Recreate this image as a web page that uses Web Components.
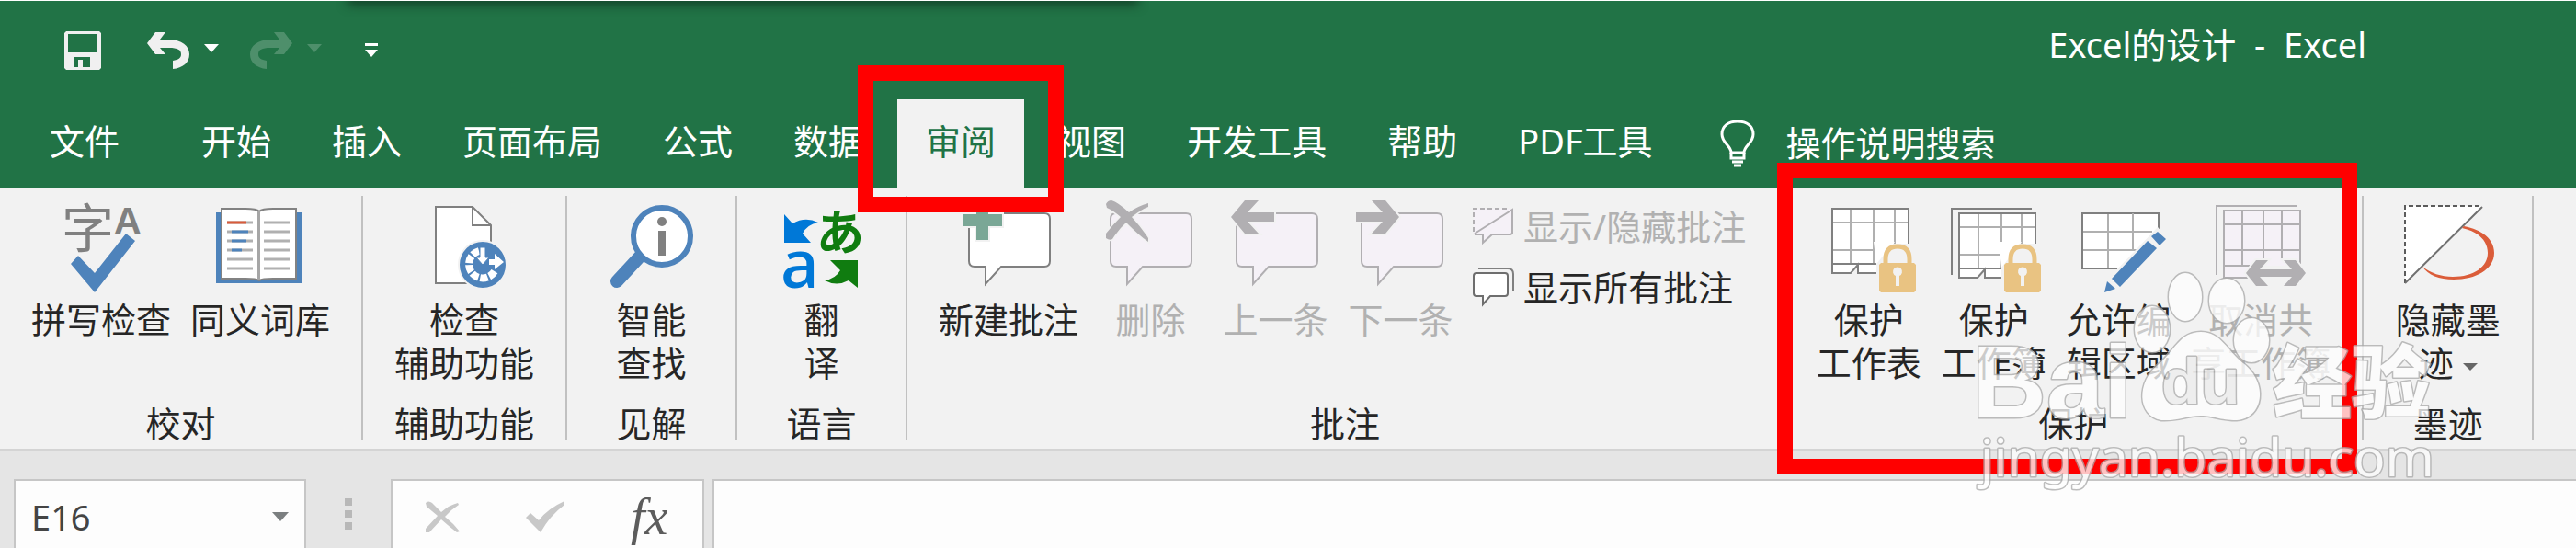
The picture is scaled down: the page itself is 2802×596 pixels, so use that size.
<!DOCTYPE html>
<html lang="zh-CN">
<head>
<meta charset="utf-8">
<title>Excel的设计 - Excel</title>
<style>
  body {
    --green: #217346;
    --ribbon: #f2f2f2;
    --ink: #262626;
    --muted: #b1b1b1;
    margin: 0;
    overflow: hidden;
    background: #e5e5e5;
    color: var(--ink);
    font-family: "Noto Sans", "Noto Sans CJK SC", sans-serif;
    font-size: 38px;
  }
</style>
</head>
<body>
<excel-window>
  <title-bar slot="title">Excel的设计&nbsp; -&nbsp; Excel</title-bar>

  <ribbon-tabs slot="tabs">
    <ribbon-tab file>文件</ribbon-tab>
    <ribbon-tab>开始</ribbon-tab>
    <ribbon-tab>插入</ribbon-tab>
    <ribbon-tab>页面布局</ribbon-tab>
    <ribbon-tab>公式</ribbon-tab>
    <ribbon-tab>数据</ribbon-tab>
    <ribbon-tab active>审阅</ribbon-tab>
    <ribbon-tab>视图</ribbon-tab>
    <ribbon-tab>开发工具</ribbon-tab>
    <ribbon-tab>帮助</ribbon-tab>
    <ribbon-tab>PDF工具</ribbon-tab>
    <tell-me>操作说明搜索</tell-me>
  </ribbon-tabs>

  <ribbon-group label="校对">
    <ribbon-button>
      <svg slot="icon" viewBox="0 0 100 111" width="100" height="111">
        <text x="7" y="56" font-family="Noto Sans CJK SC, sans-serif" font-size="57" fill="#808080">字</text>
        <text x="64" y="41" font-family="Liberation Sans, sans-serif" font-weight="bold" font-size="41" fill="#808080">A</text>
        <path d="M17 74 25 65 43 84 77 41 87 49 43 105Z" fill="#4e83bb"/>
      </svg>
      拼写检查
    </ribbon-button>
    <ribbon-button>
      <svg slot="icon" viewBox="0 0 100 111" width="100" height="111">
        <path d="M2 18H95V95H2Z" fill="#4e83bb"/>
        <path d="M8 14H34Q46 14 49 17Q52 14 64 14H89V90H64Q52 90 49 92Q46 90 34 90H8Z" fill="#fff" stroke="#828282" stroke-width="2"/>
        <path d="M48.500 17V91" stroke="#a6a6a6" stroke-width="3"/>
        <path d="M14 29H42M14 39H42M14 49H42M14 59H42M14 69H42M14 79H42M54 29H82M54 39H82M54 49H82M54 59H82M54 69H82M54 79H82" stroke="#b0b0b0" stroke-width="3"/>
        <path d="M14 29H35" stroke="#d95b3a" stroke-width="3"/>
        <path d="M19 39H37M19 49H35M19 59H30" stroke="#4e83bb" stroke-width="3"/>
      </svg>
      同义词库
    </ribbon-button>
  </ribbon-group>

  <ribbon-group label="辅助功能">
    <ribbon-button>
      <svg slot="icon" viewBox="0 0 100 111" width="100" height="111">
        <path d="M19 12H59L79 32V95H19Z" fill="#fff" stroke="#808080" stroke-width="2"/>
        <path d="M59 12V32H79" fill="none" stroke="#808080" stroke-width="2"/>
        <circle cx="70" cy="75" r="26" fill="#4e83bb" stroke="#f2f2f2" stroke-width="2"/>
        <path d="M66 60A15 15 0 1 0 83 82" fill="none" stroke="#fff" stroke-width="8" stroke-dasharray="8 2"/>
        <path d="M67 56H73V67H77L70 75 63 67H67Z" fill="#fff" stroke="#4e83bb"/>
        <path d="M77 69H83V63L93 72 83 80V75H77Z" fill="#fff"/>
      </svg>
      检查<br>辅助功能
    </ribbon-button>
  </ribbon-group>

  <ribbon-group label="见解">
    <ribbon-button>
      <svg slot="icon" viewBox="0 0 100 111" width="100" height="111">
        <path d="M37 66 12 93" stroke="#4e83bb" stroke-width="14" stroke-linecap="round"/>
        <circle cx="61" cy="44" r="31" fill="#fff" stroke="#4e83bb" stroke-width="6"/>
        <circle cx="61" cy="28" r="5" fill="#808080"/>
        <path d="M57 38H65V65H57Z" fill="#808080"/>
      </svg>
      智能<br>查找
    </ribbon-button>
  </ribbon-group>

  <ribbon-group label="语言">
    <ribbon-button>
      <svg slot="icon" viewBox="0 0 100 111" width="100" height="111">
        <path d="M9 20 18 30Q32 22 46 29Q34 31 29 41L38 51H9Z" fill="#0078d7"/>
        <text x="5" y="100" font-family="Noto Sans, sans-serif" font-weight="500" font-size="73" fill="#0078d7">a</text>
        <text x="44" y="59" font-family="Noto Sans CJK JP, sans-serif" font-weight="700" font-size="52" fill="#107c10">あ</text>
        <path d="M89 100 79 92Q66 99 53 92Q65 90 70 81L59 70H89Z" fill="#107c10"/>
      </svg>
      翻<br>译
    </ribbon-button>
  </ribbon-group>

  <ribbon-group label="批注">
    <ribbon-button>
      <svg slot="icon" viewBox="0 0 100 111" width="100" height="111">
        <path d="M13 19H89Q95 19 95 25V71Q95 77 89 77H42L25 96V77H13Q7 77 7 71V25Q7 19 13 19Z" fill="#fff" stroke="#808080" stroke-width="2"/>
        <path d="M15 9H28V20H43V33H28V48H15V33H1V20H15Z" fill="#7aa796" stroke="#f2f2f2" stroke-width="4" paint-order="stroke"/>
      </svg>
      新建批注
    </ribbon-button>
    <ribbon-button disabled>
      <svg slot="icon" viewBox="0 0 100 111" width="100" height="111">
        <path d="M12 19H88Q94 19 94 25V71Q94 77 88 77H41L24 96V77H12Q6 77 6 71V25Q6 19 12 19Z" fill="#f5f1f7" stroke="#b1afb2" stroke-width="2"/>
        <path d="M1 9Q3 5 7 5Q14 7 26 18Q36 11 47 8V12Q39 15 29 23Q40 35 47 46V50Q38 44 23 29Q15 36 8 47Q5 49 1 46V41Q8 32 17 23Q9 16 2 13Z" fill="#b1afb2" stroke="#f2f2f2" stroke-width="3" paint-order="stroke"/>
      </svg>
      删除
    </ribbon-button>
    <ribbon-button disabled>
      <svg slot="icon" viewBox="0 0 100 111" width="100" height="111">
        <path d="M13 19H89Q95 19 95 25V71Q95 77 89 77H42L25 96V77H13Q7 77 7 71V25Q7 19 13 19Z" fill="#f5f1f7" stroke="#b1afb2" stroke-width="2"/>
        <path d="M1 23 16 5H31L19 18H48V28H19L31 41H16Z" fill="#b1afb2" stroke="#f2f2f2" stroke-width="4" paint-order="stroke"/>
      </svg>
      上一条
    </ribbon-button>
    <ribbon-button disabled>
      <svg slot="icon" viewBox="0 0 100 111" width="100" height="111">
        <path d="M13 19H89Q95 19 95 25V71Q95 77 89 77H42L25 96V77H13Q7 77 7 71V25Q7 19 13 19Z" fill="#f5f1f7" stroke="#b1afb2" stroke-width="2"/>
        <path d="M48 23 33 41H18L30 28H1V18H30L18 5H33Z" fill="#b1afb2" stroke="#f2f2f2" stroke-width="4" paint-order="stroke"/>
      </svg>
      下一条
    </ribbon-button>
    <ribbon-stack>
      <small-button disabled>
        <svg slot="icon" viewBox="0 0 46 44" width="46" height="44">
          <path d="M2 3H44V31H22L12 41V31H2Z" fill="#f5f1f7"/>
          <path d="M2 28V3H42" fill="none" stroke="#b1afb2" stroke-width="2" stroke-dasharray="5 3"/>
          <path d="M3 30 44 4V30L42 31H22L12 40V31H3" fill="none" stroke="#b1afb2" stroke-width="2"/>
        </svg>
        显示/隐藏批注
      </small-button>
      <small-button>
        <svg slot="icon" viewBox="0 0 46 44" width="46" height="44">
          <path d="M7 2H39Q45 2 45 8V27" fill="none" stroke="#808080" stroke-width="2"/>
          <path d="M5 7H36Q39 7 39 10V29Q39 32 36 32H20L12 41V32H5Q2 32 2 29V10Q2 7 5 7Z" fill="#fff" stroke="#6e6e6e" stroke-width="2"/>
        </svg>
        显示所有批注
      </small-button>
    </ribbon-stack>
  </ribbon-group>

  <ribbon-group label="保护" marked>
    <ribbon-button>
      <svg slot="icon" viewBox="0 0 100 111" width="100" height="111">
        <path d="M10 14H93V74H10Z" fill="#fff"/>
        <path d="M10 74V84H31L38 76V84H60V74Z" fill="#fff"/>
        <path d="M30 14V74M55 14V74M78 14V74M10 29H93M10 59H93" stroke="#b0b0b0" stroke-width="2"/>
        <path d="M93 60V14H10V84H30L38 75V84H60M10 74H62" fill="none" stroke="#808080" stroke-width="2"/>
        <path d="M58 52H104V108H58Z" fill="#f2f2f2"/>
        <path d="M55 50H78L58 74Z" fill="#fff"/>
        <path d="M68 75V69Q68 55 81 55Q94 55 94 69V75" fill="none" stroke="#e9c382" stroke-width="5"/>
        <path d="M63 73H99L101 75V103L99 105H63L61 103V75Z" fill="#e9c382"/>
        <path d="M79 98V87A5 5 0 1 1 83 87V98Z" fill="#f2f2f2"/>
      </svg>
      保护<br>工作表
    </ribbon-button>
    <ribbon-button>
      <svg slot="icon" viewBox="0 0 100 111" width="100" height="111">
        <path d="M4 86V14H91" fill="none" stroke="#808080" stroke-width="2"/>
        <path d="M12 19H95V79H12Z" fill="#fff"/>
        <path d="M12 79V89H33L40 81V89H60V79Z" fill="#fff"/>
        <path d="M33 19V79M58 19V79M80 19V79M12 34H95M12 64H95" stroke="#b0b0b0" stroke-width="2"/>
        <path d="M95 60V19H12V89H32L40 80V89H60M12 79H62" fill="none" stroke="#808080" stroke-width="2"/>
        <path d="M58 52H104V108H58Z" fill="#f2f2f2"/>
        <path d="M55 50H80L58 78Z" fill="#fff"/>
        <path d="M68 75V69Q68 55 81 55Q94 55 94 69V75" fill="none" stroke="#e9c382" stroke-width="5"/>
        <path d="M63 73H99L101 75V103L99 105H63L61 103V75Z" fill="#e9c382"/>
        <path d="M79 98V87A5 5 0 1 1 83 87V98Z" fill="#f2f2f2"/>
      </svg>
      保护<br>工作簿
    </ribbon-button>
    <ribbon-button>
      <svg slot="icon" viewBox="0 0 100 111" width="100" height="111">
        <path d="M10 19H93V79H10Z" fill="#fff"/>
        <path d="M38 19V79M10 39H86M10 59H70" stroke="#b0b0b0" stroke-width="2"/>
        <path d="M93 36V19H10V79H48" fill="none" stroke="#808080" stroke-width="2"/>
        <path d="M44 84 92 34 104 48V70L50 108H30L36 88Z" fill="#f2f2f2"/>
        <path d="M65 19V59M65 39H86" stroke="#b0b0b0" stroke-width="2"/>
        <path d="M34 105 37 93 46 101ZM42 90 51 99 91 57 81 49ZM85 44 92 39 101 47 94 54Z" fill="#4e83bb"/>
      </svg>
      允许编<br>辑区域
    </ribbon-button>
    <ribbon-button disabled>
      <svg slot="icon" viewBox="0 0 100 111" width="100" height="111">
        <path d="M2 86V11H89" fill="none" stroke="#b1afb2" stroke-width="2"/>
        <path d="M10 16H93V76H37V89H10Z" fill="#f5f1f7"/>
        <path d="M30 16V76M53 16V68M73 16V68M10 31H93M10 59H93M10 76H38" stroke="#b1afb2" stroke-width="2"/>
        <path d="M93 74V16H10V89H38" fill="none" stroke="#b1afb2" stroke-width="2"/>
        <path d="M34 84 45 70H58L49 80H84L75 70H88L99 84 88 98H75L84 88H49L58 98H45Z" fill="#b1afb2" stroke="#f2f2f2" stroke-width="4" paint-order="stroke"/>
      </svg>
      取消共<br>享工作簿
    </ribbon-button>
  </ribbon-group>

  <ribbon-group label="墨迹">
    <ribbon-button>
      <svg slot="icon" viewBox="0 0 100 111" width="100" height="111">
        <path d="M2 11H87L3 95Z" fill="#fff"/>
        <path d="M3 95V11H87" fill="none" stroke="#5c5c5c" stroke-width="2" stroke-dasharray="5 3"/>
        <path d="M3 95 87 12" stroke="#707070" stroke-width="2"/>
        <path d="M67 33C88 37 100 48 100 62C100 80 80 91 56 91C40 91 28 86 22 77C31 84 42 88 55 88C78 88 93 77 93 62C93 50 84 39 65 35Z" fill="#db5d3a"/>
      </svg>
      隐藏墨<br>迹<drop-caret></drop-caret>
    </ribbon-button>
  </ribbon-group>

  <formula-bar slot="formula" cell="E16"></formula-bar>
  <site-watermark slot="overlay"></site-watermark>
</excel-window>

<script>
  // shared reset for the buttons inside each shadow root
  var buttonReset =
    "button { border: 0; margin: 0; padding: 0; background: none; color: inherit; font: inherit; }" +
    "svg { display: block; }";

  // attach an open shadow root filled with styles and markup
  function render(el, css, html) {
    el.attachShadow({ mode: "open" }).innerHTML = "<style>" + css + "</style>" + html;
  }

  customElements.define("excel-window", class extends HTMLElement {
    constructor() {
      super();
      render(this, `
        :host { display: block; position: relative; border-top: 1px solid #fff; }
        header { background: var(--green); color: #fff; }
        .ribbon { display: flex; padding: 9px 0 10px; background: var(--ribbon); border-bottom: 3px solid #d4d4d4; }
      `, `
        <header><slot name="title"></slot><slot name="tabs"></slot></header>
        <section class="ribbon" aria-label="审阅"><slot></slot></section>
        <slot name="formula"></slot>
        <slot name="overlay"></slot>
      `);
    }
  });

  customElements.define("title-bar", class extends HTMLElement {
    constructor() {
      super();
      render(this, buttonReset + `
        :host { display: flex; position: relative; align-items: center; height: 107px; padding: 0 228px 0 70px; box-sizing: border-box; }
        nav { display: flex; align-items: center; gap: 34px; }
        .save { padding-right: 16px; }
        .more { padding-left: 13px; }
        .split { display: flex; align-items: center; gap: 16px; }
        .off { opacity: .2; }
        h1 { margin: 0 0 14px auto; font-size: 38px; line-height: 48px; font-weight: 400; }
        .shade { position: absolute; top: 0; left: 366px; width: 884px; height: 20px; overflow: hidden; }
        .shade::before { content: ""; position: absolute; left: 14px; right: 14px; top: -10px; height: 10px; box-shadow: 0 2px 12px 2px #123f27; }
      `, `
        <nav aria-label="快速访问工具栏">
          <button class="save" aria-label="保存">
            <svg width="40" height="42" viewBox="0 0 40 42"><path fill="#f0f0f0" fill-rule="evenodd" d="M2 0H38L40 2V40L38 42H2L0 40V2ZM4 3V23H36V3ZM10 28V39H15V31H20V39H28V28Z"/></svg>
          </button>
          <span class="split">
            <button aria-label="撤消">
              <svg width="46" height="40" viewBox="0 0 46 40"><path fill="#f0f0f0" d="M0 12 9 0H20L14 8H23C38 8 46 15 46 24C46 33 39 39 28 40V31C34 30 37 28 37 24C37 19 33 17 24 17H14L20 24H9Z"/></svg>
            </button>
            <button aria-label="撤消列表"><svg width="16" height="14" viewBox="0 0 16 14"><path fill="#fff" d="M0 0H16L8 9Z"/></svg></button>
          </span>
          <span class="split off">
            <button aria-label="恢复" disabled>
              <svg width="46" height="40" viewBox="0 0 46 40"><path fill="#fff" d="M46 12 37 0H26L32 8H23C8 8 0 15 0 24C0 33 7 39 18 40V31C12 30 9 28 9 24C9 19 13 17 22 17H32L26 24H37Z"/></svg>
            </button>
            <button aria-label="恢复列表" disabled><svg width="16" height="14" viewBox="0 0 16 14"><path fill="#fff" d="M0 0H16L8 9Z"/></svg></button>
          </span>
          <button class="more" aria-label="自定义快速访问工具栏">
            <svg width="14" height="16" viewBox="0 0 14 16"><path fill="#fff" d="M0 0H14V3H0ZM0 7H14L7 15Z"/></svg>
          </button>
        </nav>
        <h1><slot></slot></h1>
        <div class="shade"></div>
      `);
    }
  });

  customElements.define("ribbon-tabs", class extends HTMLElement {
    constructor() {
      super();
      render(this, `
        :host { display: flex; align-items: stretch; height: 96px; }
      `, `<slot></slot>`);
    }
  });

  customElements.define("ribbon-tab", class extends HTMLElement {
    constructor() {
      super();
      render(this, buttonReset + `
        :host { display: block; position: relative; margin: 0 2px; }
        :host([file]) { margin: 0; }
        :host([active]) { margin: 0 2px 0 4px; }
        button { height: 100%; padding: 0 31px 10px; white-space: nowrap; }
        :host([file]) button { padding: 0 56px 10px 54px; }
        :host([active]) button { background: var(--ribbon); color: var(--green); }
        :host([active])::after {
          content: ""; position: absolute; z-index: 1; inset: -37px -43px -27px;
          border: 17px solid #f00; pointer-events: none;
        }
      `, `<button role="tab"><slot></slot></button>`);
    }
  });

  customElements.define("tell-me", class extends HTMLElement {
    constructor() {
      super();
      render(this, buttonReset + `
        :host { display: block; margin-left: 40px; }
        button { display: flex; align-items: center; gap: 34px; height: 100%; white-space: nowrap; }
        span { padding-bottom: 6px; }
      `, `
        <button>
          <svg width="38" height="52" viewBox="0 0 38 52" fill="none" stroke="#fff" stroke-width="3">
            <path d="M12 36C12 28 2 26 2 16C2 7 9 2 19 2C29 2 36 7 36 16C36 26 26 28 26 36Z"/>
            <path d="M12 36V42H26V36M13 46H25M15 50H23"/>
          </svg>
          <span><slot></slot></span>
        </button>
      `);
    }
  });

  customElements.define("ribbon-group", class extends HTMLElement {
    constructor() {
      super();
      render(this, `
        :host { display: flex; position: relative; flex-direction: column; padding: 0 24px; border-right: 2px solid #c1c1c1; }
        .items { display: flex; flex: 1; gap: 1px; margin-bottom: 24px; }
        .label { line-height: 36px; text-align: center; }
        :host([marked])::after {
          content: ""; position: absolute; z-index: 1; inset: -36px 5px -38px -8px;
          border: 17px solid #f00; pointer-events: none;
        }
      `, `<div class="items"><slot></slot></div><div class="label"></div>`);
    }

    connectedCallback() {
      this.shadowRoot.querySelector(".label").textContent = this.getAttribute("label");
    }
  });

  customElements.define("ribbon-button", class extends HTMLElement {
    constructor() {
      super();
      render(this, buttonReset + `
        :host { display: block; }
        :host([disabled]) { color: var(--muted); }
        button { display: flex; flex-direction: column; align-items: center; min-width: 135px; padding: 0 10px; }
        .text { min-height: 94px; line-height: 47px; white-space: nowrap; }
        ::slotted(svg) { display: block; overflow: visible; }
      `, `<button><slot name="icon"></slot><span class="text"><slot></slot></span></button>`);
    }

    connectedCallback() {
      this.shadowRoot.querySelector("button").disabled = this.hasAttribute("disabled");
    }
  });

  customElements.define("drop-caret", class extends HTMLElement {
    constructor() {
      super();
      render(this, `
        :host { display: inline-block; margin-left: 10px; vertical-align: middle; }
        svg { display: block; }
      `, `<svg width="16" height="8" viewBox="0 0 16 8"><path fill="#666" d="M0 0H16L8 8Z"/></svg>`);
    }
  });

  customElements.define("ribbon-stack", class extends HTMLElement {
    constructor() {
      super();
      render(this, `
        :host { display: flex; flex-direction: column; padding: 0 16px 0 9px; }
      `, `<slot></slot>`);
    }
  });

  customElements.define("small-button", class extends HTMLElement {
    constructor() {
      super();
      render(this, buttonReset + `
        :host { display: block; }
        :host([disabled]) { color: var(--muted); }
        button { display: flex; align-items: center; gap: 10px; line-height: 66px; white-space: nowrap; }
      `, `<button><slot name="icon"></slot><span><slot></slot></span></button>`);
    }

    connectedCallback() {
      this.shadowRoot.querySelector("button").disabled = this.hasAttribute("disabled");
    }
  });

  customElements.define("formula-bar", class extends HTMLElement {
    constructor() {
      super();
      render(this, buttonReset + `
        :host { display: flex; height: 75px; padding: 30px 0 0 15px; color: #444; }
        .box { display: flex; align-items: center; box-sizing: border-box; border: 2px solid #c6c6c6; border-bottom: 0; background: #fdfdfd; }
        input { min-width: 0; border: 0; margin: 0; padding: 0; outline: 0; background: none; color: inherit; font: inherit; }
        .name { width: 318px; padding: 4px 17px 0; }
        .name input { flex: 1; line-height: 48px; }
        .dots { display: flex; flex-direction: column; justify-content: center; gap: 5px; margin: 0 42px; }
        .dots i { width: 8px; height: 8px; background: #b8b8b8; }
        .tools { gap: 72px; padding: 4px 38px 0 35px; }
        .fx { font: italic 56px/60px "Liberation Serif", serif; color: #5c5c5c; }
        .formula { flex: 1; margin-left: 9px; border-right: 0; }
        .formula input { flex: 1; }
      `, `
        <div class="box name">
          <input type="text" aria-label="名称框">
          <button aria-label="名称列表"><svg width="18" height="10" viewBox="0 0 18 10"><path fill="#7b7f80" d="M0 0H18L9 10Z"/></svg></button>
        </div>
        <div class="dots"><i></i><i></i><i></i></div>
        <div class="box tools">
          <button aria-label="取消" disabled>
            <svg width="38" height="34" viewBox="0 0 38 34"><path fill="#c8c8c8" d="M1 2Q4-1 8 2L18 12Q27 4 36 2L37 4Q29 9 22 17Q31 24 38 33L35 34Q27 28 18 20L5 34H1V30L14 16L2 6Z"/></svg>
          </button>
          <button aria-label="输入" disabled>
            <svg width="42" height="34" viewBox="0 0 42 34"><path fill="#c8c8c8" d="M0 18 5 13 14 21Q24 8 42 0V4Q26 16 16 34Z"/></svg>
          </button>
          <button class="fx" aria-label="插入函数">fx</button>
        </div>
        <div class="box formula"><input type="text" aria-label="编辑栏"></div>
      `);
    }

    connectedCallback() {
      this.shadowRoot.querySelector("input").value = this.getAttribute("cell");
    }
  });

  customElements.define("site-watermark", class extends HTMLElement {
    constructor() {
      super();
      render(this, `
        :host { position: absolute; z-index: 2; top: 289px; right: 142px; opacity: .76; pointer-events: none; }
        svg { display: block; overflow: visible; }
        .mark { fill: #fff; stroke: #aaa; stroke-width: 3px; paint-order: stroke; stroke-linejoin: round; }
        .latin { font: bold 112px "Liberation Sans", sans-serif; }
        .du { font: bold 70px "Liberation Sans", sans-serif; fill: #eee; }
        .cjk { font: 900 86px "Noto Sans CJK SC", sans-serif; }
        .url { font: 57px "Noto Sans", sans-serif; }
      `, `
        <svg width="512" height="250" viewBox="0 0 512 250">
          <g class="mark">
            <ellipse cx="229" cy="33" rx="18" ry="26"/>
            <ellipse cx="274" cy="37" rx="19" ry="24"/>
            <ellipse cx="193" cy="68" rx="19" ry="25"/>
            <ellipse cx="301" cy="80" rx="19" ry="24"/>
            <path d="M246 71C268 71 275 92 292 105C320 127 314 165 285 167C266 167 260 162 246 162C231 162 222 168 203 167C176 162 176 125 200 106C218 91 223 71 246 71Z"/>
          </g>
          <text class="mark latin" x="-3" y="164">Bai</text>
          <text class="mark du" x="203" y="149">du</text>
          <text class="mark cjk" x="324" y="158">经验</text>
          <text class="mark url" x="6" y="228">jingyan.baidu.com</text>
        </svg>
      `);
    }
  });
</script>
</body>
</html>
